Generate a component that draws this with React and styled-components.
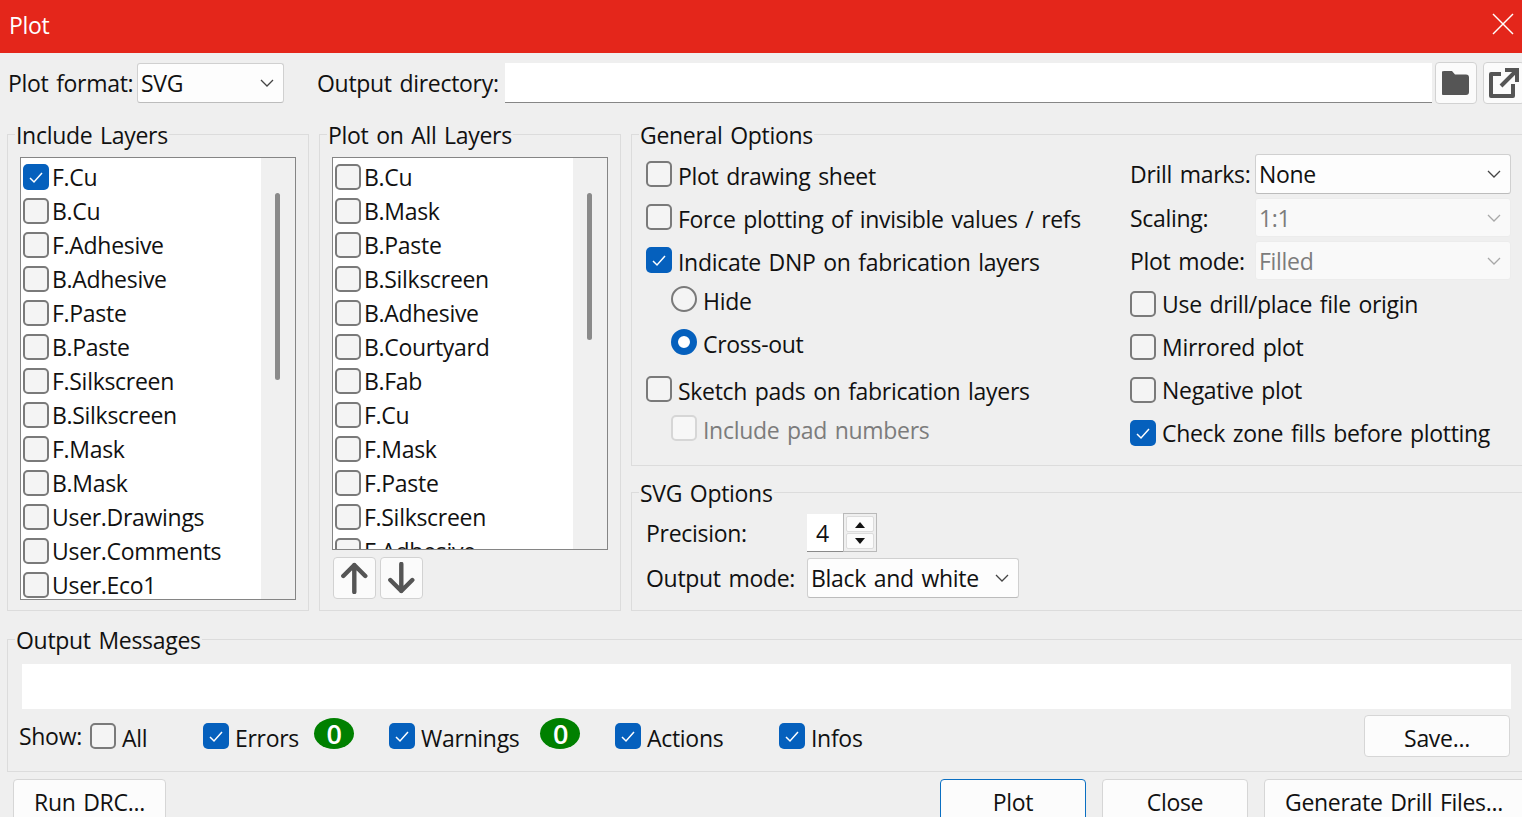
import React from 'react';
import styled, { createGlobalStyle } from 'styled-components';

const Global = createGlobalStyle`
  html, body {
    margin: 0;
    height: 100%;
    overflow: hidden;
    background: #efefef;
  }
  * { box-sizing: border-box; }
`;

const Window = styled.div`
  width: 1560px;
  height: 817px;
  overflow: hidden;
  background: #efefef;
  color: #111;
  font-family: 'Open Sans', 'Noto Sans', sans-serif;
  font-size: 23px;
  letter-spacing: -0.3px;
  word-spacing: 2px;
`;

const TitleBar = styled.div`
  width: 1522px;
  height: 53px;
  background: #e4261b;
  color: #fff;
  display: flex;
  align-items: center;
  justify-content: space-between;
  padding: 0 8px 4px 9px;
`;

const CloseIcon = styled.svg`
  margin-bottom: 2px;
`;

const TopRow = styled.div`
  height: 50px;
  padding: 9px 0 0 8px;
  display: flex;
  align-items: center;
`;

const TextInput = styled.div`
  width: 927px;
  height: 40px;
  background: #fff;
  border-bottom: 1px solid #868686;
`;

const IconButton = styled.div`
  width: ${(p) => p.$w || 42}px;
  height: ${(p) => p.$h || 42}px;
  margin-left: ${(p) => p.$ml || 0}px;
  flex-shrink: 0;
  display: flex;
  align-items: center;
  justify-content: center;
  background: #fbfbfb;
  border: 1px solid #d2d2d2;
  border-radius: 4px;
`;

const Label = styled.span`
  width: ${(p) => (p.$w ? `${p.$w}px` : 'auto')};
  margin-left: ${(p) => p.$ml || 0}px;
  flex-shrink: 0;
  white-space: nowrap;
  line-height: 30px;
`;

const SelectBox = styled.div`
  width: ${(p) => p.$w}px;
  height: ${(p) => p.$h || 40}px;
  flex-shrink: 0;
  display: flex;
  align-items: center;
  justify-content: space-between;
  padding: 0 9px 0 3px;
  background: ${(p) => (p.$disabled ? '#f9f9f9' : '#fdfdfd')};
  color: ${(p) => (p.$disabled ? '#7c7c7c' : '#111')};
  border: 1px solid ${(p) => (p.$disabled ? '#ececec' : '#d0d0d0')};
  border-bottom-color: ${(p) => (p.$disabled ? '#ececec' : '#bcbcbc')};
  border-radius: 3px;
  white-space: nowrap;
`;

const Columns = styled.div`
  display: flex;
  gap: 10px;
  margin: 16px 0 0 7px;
`;

const Group = styled.fieldset`
  margin: 0;
  min-width: 0;
  flex-shrink: 0;
  width: ${(p) => p.$w}px;
  height: ${(p) => p.$h}px;
  padding: ${(p) => p.$pad || '8px 12px 0'};
  border: 1px solid #dcdcdc;
`;

const MessagesGroup = styled(Group)`
  margin: 13px 0 0 7px;
`;

const Legend = styled.legend`
  margin-left: ${(p) => p.$ml || -7}px;
  padding: 2px 1px 0;
  line-height: 28px;
`;

const ListBox = styled.div`
  width: 276px;
  height: ${(p) => p.$h}px;
  display: flex;
  background: #fff;
  border: 1px solid #858585;
  overflow: hidden;
`;

const ListRows = styled.div`
  flex: 1;
  padding: 2px 0 0 2px;
  overflow: hidden;
`;

const ListRow = styled.div`
  height: 34px;
  display: flex;
  align-items: center;
  gap: 3px;
  white-space: nowrap;
`;

const ScrollTrack = styled.div`
  width: 34px;
  padding: 35px 0 0 14px;
  background: #f0f0f0;
`;

const ScrollThumb = styled.div`
  width: 5px;
  height: ${(p) => p.$h}px;
  background: #8a8a8a;
  border-radius: 3px;
`;

const BoxMark = styled.span`
  width: 26px;
  height: 26px;
  flex-shrink: 0;
  display: flex;
  align-items: center;
  justify-content: center;
  border-radius: 5px;
  background: ${(p) => (p.$on ? '#0560bd' : p.$disabled ? '#f7f7f7' : '#f4f4f4')};
  border: ${(p) => (p.$on ? 'none' : p.$disabled ? '2px solid #d6d6d6' : '2px solid #7a7a7a')};
`;

const RadioMark = styled.span`
  width: 26px;
  height: 26px;
  flex-shrink: 0;
  border-radius: 50%;
  background: ${(p) => (p.$on ? '#fff' : '#f4f4f4')};
  border: ${(p) => (p.$on ? '7px solid #0560bd' : '2px solid #7a7a7a')};
`;

const Option = styled.div`
  height: 34px;
  margin-top: ${(p) => p.$mt || 0}px;
  padding-left: ${(p) => p.$indent || 0}px;
  display: flex;
  align-items: center;
  gap: 6px;
  white-space: nowrap;
  color: ${(p) => (p.$disabled ? '#7c7c7c' : 'inherit')};
`;

const OptionText = styled.span`
  padding-top: 3px;
`;

const GeneralBody = styled.div`
  display: flex;
  padding-top: 5px;
`;

const OptionsColumn = styled.div`
  width: 484px;
  display: flex;
  flex-direction: column;
  gap: 9px;
  padding-top: 3px;
`;

const SideColumn = styled.div`
  width: 381px;
  display: flex;
  flex-direction: column;
`;

const FieldRow = styled.div`
  display: flex;
  align-items: center;
  margin-bottom: 4px;
`;

const SideChecks = styled.div`
  display: flex;
  flex-direction: column;
  gap: 9px;
  padding-top: 3px;
`;

const RightStack = styled.div`
  display: flex;
  flex-direction: column;
  gap: 11px;
`;

const ArrowRow = styled.div`
  display: flex;
  gap: 4px;
  margin: 7px 0 0 1px;
`;

const Spin = styled.div`
  width: 70px;
  height: 38px;
  display: flex;
  background: #fff;
  border-bottom: 1px solid #8a8a8a;
`;

const SpinValue = styled.span`
  flex: 1;
  padding-left: 9px;
  line-height: 38px;
`;

const SpinButtons = styled.div`
  width: 34px;
  margin: -1px 0;
  padding: 2px;
  display: flex;
  flex-direction: column;
  gap: 1px;
  background: #efefef;
  border: 1px solid #b9b9b9;
`;

const SpinButton = styled.div`
  flex: 1;
  display: flex;
  align-items: center;
  justify-content: center;
  background: #fbfbfb;
  border: 1px solid #dcdcdc;
  border-radius: 2px;
`;

const SvgRow = styled.div`
  display: flex;
  align-items: center;
  margin-top: ${(p) => p.$mt || 0}px;
`;

const MessageBox = styled.div`
  height: 45px;
  background: #fff;
  width: 1489px;
`;

const ShowRow = styled.div`
  display: flex;
  align-items: center;
  height: 48px;
  margin: 3px 0 0 -3px;
`;

const Filter = styled.div`
  width: ${(p) => p.$w}px;
  flex-shrink: 0;
  display: flex;
  align-items: center;
  gap: 6px;
  white-space: nowrap;
`;

const Badge = styled.span`
  width: 40px;
  height: 31px;
  margin: -5px 0 0 ${(p) => p.$ml}px;
  display: flex;
  align-items: center;
  justify-content: center;
  background: #008000;
  color: #fff;
  border-radius: 50%;
  font-size: 27px;
  font-weight: 600;
`;

const PushButton = styled.div`
  width: ${(p) => (p.$w ? `${p.$w}px` : 'auto')};
  height: ${(p) => p.$h || 60}px;
  margin-left: ${(p) => p.$ml || 0}px;
  padding: ${(p) => p.$pad || '0'};
  flex-shrink: 0;
  display: flex;
  align-items: ${(p) => (p.$h ? 'center' : 'flex-start')};
  justify-content: center;
  background: #fcfcfc;
  border: 1px solid ${(p) => (p.$primary ? '#0a6fc2' : '#d6d6d6')};
  border-radius: 4px;
  line-height: 44px;
  white-space: nowrap;
`;

const Footer = styled.div`
  display: flex;
  margin: 7px 0 0 13px;
`;

const Chevron = ({ disabled }) => (
  <svg width="14" height="8" viewBox="0 0 14 8" fill="none" stroke={disabled ? '#a8a8a8' : '#444'} strokeWidth="1.3">
    <polyline points="1,1 7,7 13,1" />
  </svg>
);

const Check = () => (
  <svg width="16" height="13" viewBox="0 0 16 13" fill="none" stroke="#fff" strokeWidth="1.5">
    <polyline points="2,7 6,11 14,2" />
  </svg>
);

const Checkbox = ({ on, disabled }) => (
  <BoxMark $on={on} $disabled={disabled}>{on && <Check />}</BoxMark>
);

const Triangle = ({ down }) => (
  <svg width="12" height="7" viewBox="0 0 12 7" fill="#111">
    <polygon points={down ? '1,0 11,0 6,6' : '1,7 11,7 6,1'} />
  </svg>
);

const FolderIcon = () => (
  <svg width="28" height="24" viewBox="1 0 28 24" fill="#555">
    <path d="M3 0h8l3 3.5h11a3 3 0 0 1 3 3V21a3 3 0 0 1-3 3H3a3 3 0 0 1-3-3V3a3 3 0 0 1 3-3z" />
  </svg>
);

const OpenExternalIcon = () => (
  <svg width="30" height="30" viewBox="0 0 30 30" fill="none" stroke="#555" strokeWidth="4">
    <path d="M12 6H2v22h22V16" strokeLinejoin="round" />
    <path d="M16 2h12v12M28 2L12 18" />
  </svg>
);

const UpIcon = () => (
  <svg width="28" height="32" viewBox="0.7 0 28 32" fill="none" stroke="#555" strokeWidth="4.4" strokeLinecap="round" strokeLinejoin="round">
    <path d="M14 3v27M3 14L14 3l11 11" />
  </svg>
);

const DownIcon = () => (
  <svg width="28" height="32" viewBox="0.7 0 28 32" fill="none" stroke="#555" strokeWidth="4.4" strokeLinecap="round" strokeLinejoin="round">
    <path d="M14 2v27M3 18l11 11 11-11" />
  </svg>
);

const includeLayers = ['F.Cu', 'B.Cu', 'F.Adhesive', 'B.Adhesive', 'F.Paste', 'B.Paste', 'F.Silkscreen', 'B.Silkscreen', 'F.Mask', 'B.Mask', 'User.Drawings', 'User.Comments', 'User.Eco1'];
const allLayers = ['B.Cu', 'B.Mask', 'B.Paste', 'B.Silkscreen', 'B.Adhesive', 'B.Courtyard', 'B.Fab', 'F.Cu', 'F.Mask', 'F.Paste', 'F.Silkscreen', 'F.Adhesive'];

const LayerList = ({ layers, height, thumb, checked }) => (
  <ListBox $h={height}>
    <ListRows>
      {layers.map((name) => (
        <ListRow key={name}>
          <Checkbox on={name === checked} />
          {name}
        </ListRow>
      ))}
    </ListRows>
    <ScrollTrack>
      <ScrollThumb $h={thumb} />
    </ScrollTrack>
  </ListBox>
);

const App = () => (
  <Window>
    <Global />
    <TitleBar>
      Plot
      <CloseIcon width="22" height="22" viewBox="0 0 22 22" stroke="#fff" strokeWidth="1.5">
        <line x1="1" y1="1" x2="21" y2="21" />
        <line x1="21" y1="1" x2="1" y2="21" />
      </CloseIcon>
    </TitleBar>

    <TopRow>
      <Label $w={129}>Plot format:</Label>
      <SelectBox $w={147}>SVG<Chevron /></SelectBox>
      <Label $ml={33} $w={188}>Output directory:</Label>
      <TextInput />
      <IconButton $ml={3}><FolderIcon /></IconButton>
      <IconButton $ml={6}><OpenExternalIcon /></IconButton>
    </TopRow>

    <Columns>
      <Group $w={302} $h={492}>
        <Legend $ml={-5}>Include Layers</Legend>
        <LayerList layers={includeLayers} height={443} thumb={187} checked="F.Cu" />
      </Group>

      <Group $w={302} $h={492}>
        <Legend $ml={-5}>Plot on All Layers</Legend>
        <LayerList layers={allLayers} height={393} thumb={147} />
        <ArrowRow>
          <IconButton $w={43}><UpIcon /></IconButton>
          <IconButton $w={43}><DownIcon /></IconButton>
        </ArrowRow>
      </Group>

      <RightStack>
        <Group $w={910} $h={347} $pad="0 0 0 14px">
          <Legend>General Options</Legend>
          <GeneralBody>
            <OptionsColumn>
              <Option><Checkbox /><OptionText>Plot drawing sheet</OptionText></Option>
              <Option><Checkbox /><OptionText>Force plotting of invisible values / refs</OptionText></Option>
              <Option><Checkbox on /><OptionText>Indicate DNP on fabrication layers</OptionText></Option>
              <Option $indent={25} $mt={-4}><RadioMark /><OptionText>Hide</OptionText></Option>
              <Option $indent={25}><RadioMark $on /><OptionText>Cross-out</OptionText></Option>
              <Option $mt={4}><Checkbox /><OptionText>Sketch pads on fabrication layers</OptionText></Option>
              <Option $indent={25} $mt={-4} $disabled><Checkbox disabled /><OptionText>Include pad numbers</OptionText></Option>
            </OptionsColumn>
            <SideColumn>
              <FieldRow>
                <Label $w={125}>Drill marks:</Label>
                <SelectBox $w={256}>None<Chevron /></SelectBox>
              </FieldRow>
              <FieldRow>
                <Label $w={125}>Scaling:</Label>
                <SelectBox $w={256} $h={39} $disabled>1:1<Chevron disabled /></SelectBox>
              </FieldRow>
              <FieldRow>
                <Label $w={125}>Plot mode:</Label>
                <SelectBox $w={256} $h={39} $disabled>Filled<Chevron disabled /></SelectBox>
              </FieldRow>
              <SideChecks>
                <Option><Checkbox />Use drill/place file origin</Option>
                <Option><Checkbox />Mirrored plot</Option>
                <Option><Checkbox />Negative plot</Option>
                <Option><Checkbox on />Check zone fills before plotting</Option>
              </SideChecks>
            </SideColumn>
          </GeneralBody>
        </Group>

        <Group $w={910} $h={134} $pad="7px 0 0 14px">
          <Legend>SVG Options</Legend>
          <SvgRow>
            <Label $w={161}>Precision:</Label>
            <Spin>
              <SpinValue>4</SpinValue>
              <SpinButtons>
                <SpinButton><Triangle /></SpinButton>
                <SpinButton><Triangle down /></SpinButton>
              </SpinButtons>
            </Spin>
          </SvgRow>
          <SvgRow $mt={6}>
            <Label $w={161}>Output mode:</Label>
            <SelectBox $w={212}>Black and white<Chevron /></SelectBox>
          </SvgRow>
        </Group>
      </RightStack>
    </Columns>

    <MessagesGroup $w={1553} $h={148} $pad="10px 0 0 14px">
      <Legend>Output Messages</Legend>
      <MessageBox />
      <ShowRow>
        <Label $w={71}>Show:</Label>
        <Filter $w={113}><Checkbox /><OptionText>All</OptionText></Filter>
        <Filter $w={186}><Checkbox on /><OptionText>Errors</OptionText><Badge $ml={9}>0</Badge></Filter>
        <Filter $w={226}><Checkbox on /><OptionText>Warnings</OptionText><Badge $ml={15}>0</Badge></Filter>
        <Filter $w={164}><Checkbox on /><OptionText>Actions</OptionText></Filter>
        <Filter $w={585}><Checkbox on /><OptionText>Infos</OptionText></Filter>
        <PushButton $w={146} $h={42}><OptionText>Save...</OptionText></PushButton>
      </ShowRow>
    </MessagesGroup>

    <Footer>
      <PushButton $w={153}>Run DRC...</PushButton>
      <PushButton $w={146} $ml={774} $primary>Plot</PushButton>
      <PushButton $w={146} $ml={16}>Close</PushButton>
      <PushButton $ml={16} $pad="0 26px 0 20px">Generate Drill Files...</PushButton>
    </Footer>
  </Window>
);

export default App;
